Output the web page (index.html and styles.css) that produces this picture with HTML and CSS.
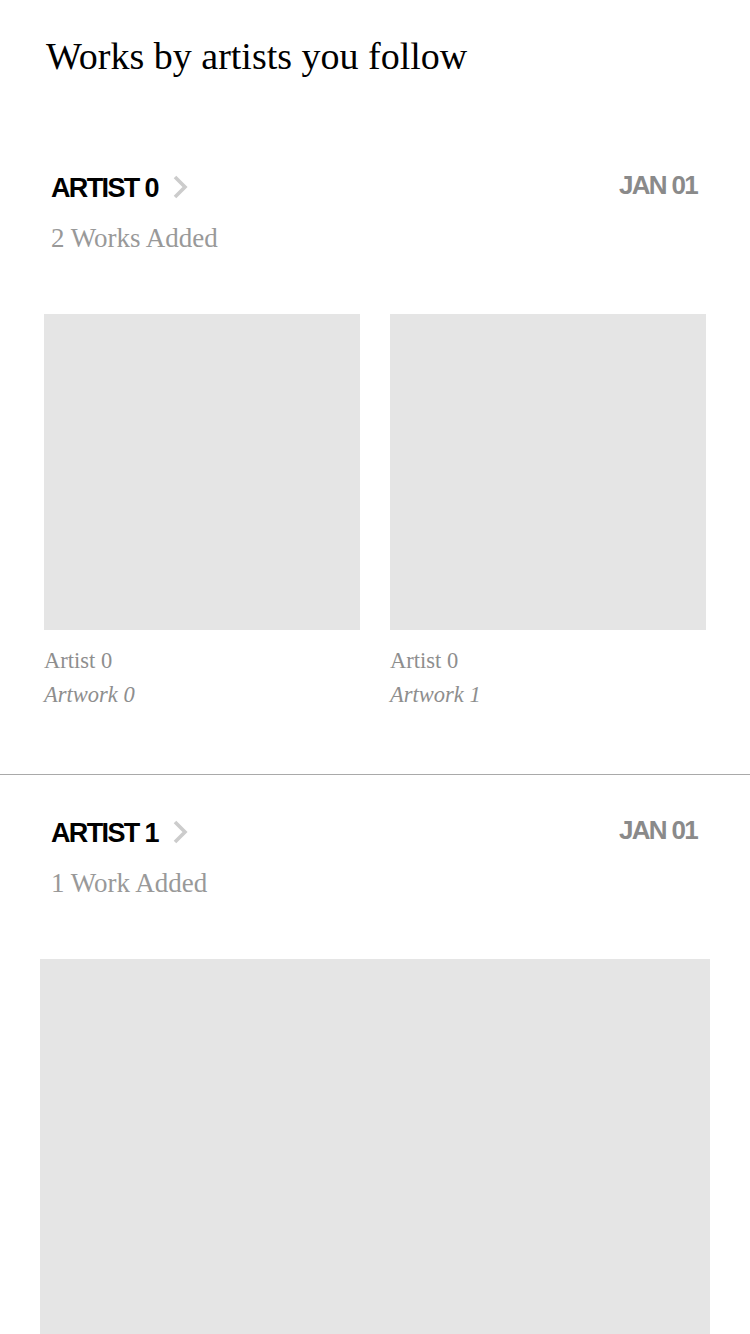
FILE: index.html
```html
<!DOCTYPE html>
<html lang="en">
<head>
<meta charset="utf-8">
<title>Works by artists you follow</title>
<link rel="stylesheet" href="styles.css">
</head>
<body>
<main class="page">
  <h1 class="title">Works by artists you follow</h1>

  <section class="feed-item">
    <header class="feed-header">
      <div class="feed-meta">
        <div class="artist-row">
          <span class="artist-name">ARTIST 0</span>
          <svg class="chevron" viewBox="0 0 16 24" width="16" height="24" aria-hidden="true">
            <path d="M3 2 L13 12 L3 22" fill="none" stroke="#cccccc" stroke-width="3.6"/>
          </svg>
        </div>
        <div class="count">2 Works Added</div>
      </div>
      <div class="date">JAN 01</div>
    </header>
    <div class="grid">
      <figure class="work">
        <div class="thumb"></div>
        <figcaption class="caption">
          <div class="cap-artist">Artist 0</div>
          <div class="cap-title">Artwork 0</div>
        </figcaption>
      </figure>
      <figure class="work">
        <div class="thumb"></div>
        <figcaption class="caption">
          <div class="cap-artist">Artist 0</div>
          <div class="cap-title">Artwork 1</div>
        </figcaption>
      </figure>
    </div>
  </section>

  <section class="feed-item divided">
    <header class="feed-header">
      <div class="feed-meta">
        <div class="artist-row">
          <span class="artist-name">ARTIST 1</span>
          <svg class="chevron" viewBox="0 0 16 24" width="16" height="24" aria-hidden="true">
            <path d="M3 2 L13 12 L3 22" fill="none" stroke="#cccccc" stroke-width="3.6"/>
          </svg>
        </div>
        <div class="count">1 Work Added</div>
      </div>
      <div class="date">JAN 01</div>
    </header>
    <div class="single">
      <div class="thumb big"></div>
    </div>
  </section>
</main>
</body>
</html>
```

FILE: styles.css
```css
html, body {
  margin: 0;
  padding: 0;
  background: #ffffff;
}

body {
  font-family: "Liberation Serif", "Times New Roman", serif;
  color: #000;
}

.page {
  display: flex;
  flex-direction: column;
}

.title {
  margin: 0;
  padding: 34px 46px 0;
  font-family: "Liberation Serif", serif;
  font-weight: normal;
  font-size: 38px;
  line-height: 44px;
  height: 44px;
  margin-bottom: 50px;
  color: #000;
}

.feed-item {
  padding: 44px 0 62px;
}

.feed-item.divided {
  border-top: 1px solid #a9a9a9;
  padding-top: 42px;
}

.feed-header {
  display: flex;
  justify-content: space-between;
  align-items: flex-start;
  padding: 0 53px 0 51px;
}

.feed-meta {
  display: flex;
  flex-direction: column;
  gap: 18px;
}

.artist-row {
  display: flex;
  align-items: center;
  height: 32px;
}

.artist-name {
  font-family: "Liberation Sans", Arial, sans-serif;
  font-weight: bold;
  font-size: 27px;
  line-height: 32px;
  letter-spacing: -1.65px;
  color: #000;
}

.chevron {
  display: block;
  margin-left: 14px;
  margin-top: -3px;
}

.count {
  font-family: "Liberation Serif", serif;
  font-size: 27px;
  line-height: 32px;
  color: #999999;
}

.date {
  font-family: "Liberation Sans", Arial, sans-serif;
  font-weight: bold;
  font-size: 26px;
  line-height: 26px;
  letter-spacing: -1.7px;
  color: #8a8a8a;
}

.grid {
  display: grid;
  grid-template-columns: 1fr 1fr;
  gap: 30px;
  padding: 0 44px;
  margin-top: 60px;
}

.work {
  margin: 0;
}

.thumb {
  background: #e5e5e5;
  aspect-ratio: 1 / 1;
}

.caption {
  margin-top: 14px;
  font-family: "Liberation Serif", serif;
  font-size: 22.5px;
  line-height: 34px;
  color: #8e8e8e;
}

.cap-title {
  font-style: italic;
}

.single {
  padding: 0 40px;
  margin-top: 60px;
}

.thumb.big {
  aspect-ratio: 1 / 1;
}
```
